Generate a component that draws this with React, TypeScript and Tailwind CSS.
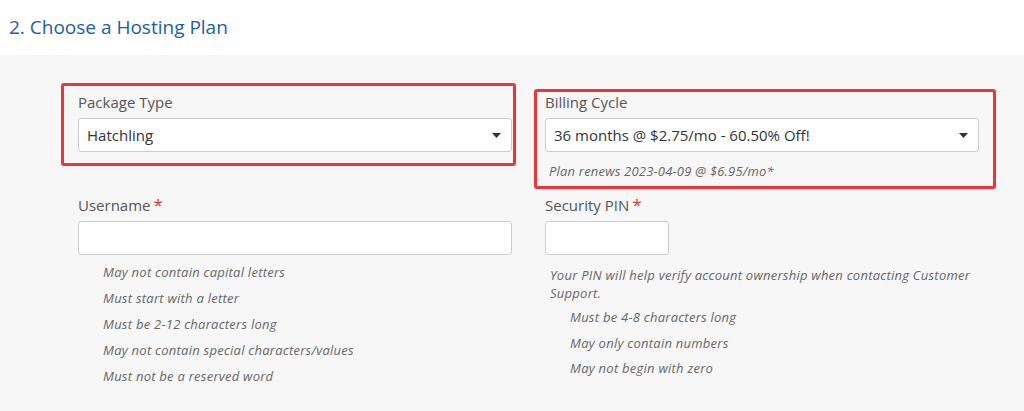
const userRules: string[] = [
  "May not contain capital letters",
  "Must start with a letter",
  "Must be 2-12 characters long",
  "May not contain special characters/values",
  "Must not be a reserved word",
];

const pinRules: string[] = [
  "Must be 4-8 characters long",
  "May only contain numbers",
  "May not begin with zero",
];

const Caret = () => (
  <svg width="9" height="5" viewBox="0 0 9 5" className="shrink-0">
    <path d="M0 0h9L4.5 5z" fill="#333" />
  </svg>
);

const Label = ({ text, required }: { text: string; required?: boolean }) => (
  <div className="h-5 leading-5 text-[15px] text-[#555]">
    {text}
    {required && <span className="ml-[3px] text-[17px] text-[#e0333a]">*</span>}
  </div>
);

const Select = ({ value }: { value: string }) => (
  <div className="mt-[6px] h-[34px] bg-white border border-[#ccc] rounded-[3px] flex items-center justify-between pl-[8px] pr-[10px] text-[15px] text-[#333]">
    <span>{value}</span>
    <Caret />
  </div>
);

const App = () => {
  return (
    <div
      className="w-[1024px] h-[411px] flex flex-col bg-white overflow-hidden"
      style={{ fontFamily: "'Open Sans', 'Noto Sans', sans-serif" }}
    >
      <div className="h-[55px] shrink-0 flex items-center px-[9px]">
        <h2 className="text-[19px] text-[#1a5ea6] leading-none">
          2. Choose a Hosting Plan
        </h2>
      </div>

      <div className="flex-1 bg-[#f7f7f7] pl-[78px] pt-[37px]">
        <div className="grid grid-cols-[434px_434px] gap-x-[33px] items-start">
          {/* row 1 */}
          <div className="relative">
            <Label text="Package Type" />
            <Select value="Hatchling" />
            <div className="absolute -top-[9px] -left-[17px] -right-[4px] -bottom-[14px] border-[3px] border-[#e8363d] rounded-[3px] pointer-events-none" />
          </div>
          <div className="relative">
            <Label text="Billing Cycle" />
            <Select value="36 months @ $2.75/mo - 60.50% Off!" />
            <p className="mt-[10px] pl-[4px] text-[13px] leading-[18px] italic tracking-[0.2px] text-[#666]">
              Plan renews 2023-04-09 @ $6.95/mo*
            </p>
            <div className="absolute -top-[3px] -left-[11px] -right-[17px] -bottom-[9px] border-[3px] border-[#e8363d] rounded-[3px] pointer-events-none" />
          </div>

          {/* row 2 */}
          <div className="mt-[15px]">
            <Label text="Username" required />
            <div className="mt-[6px] h-[34px] bg-white border border-[#ccc] rounded-[3px]" />
            <ul className="mt-[4px] pl-[25px] text-[13px] leading-[26px] italic tracking-[0.25px] text-[#666]">
              {userRules.map((r, i) => (
                <li key={i}>{r}</li>
              ))}
            </ul>
          </div>
          <div className="mt-[15px]">
            <Label text="Security PIN" required />
            <div className="mt-[6px] w-[124px] h-[34px] bg-white border border-[#ccc] rounded-[3px]" />
            <p className="mt-[11px] pl-[5px] text-[13px] leading-[18px] italic tracking-[0.25px] text-[#666]">
              Your PIN will help verify account ownership when contacting Customer Support.
            </p>
            <ul className="mt-[3px] pl-[25px] text-[13px] leading-[25.5px] italic tracking-[0.25px] text-[#666]">
              {pinRules.map((r, i) => (
                <li key={i}>{r}</li>
              ))}
            </ul>
          </div>
        </div>
      </div>
    </div>
  );
};

export default App;
